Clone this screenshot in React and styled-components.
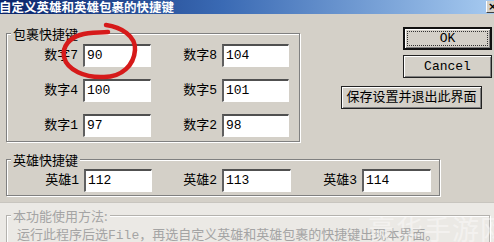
import React from 'react';
import styled, { createGlobalStyle } from 'styled-components';

const GlobalStyle = createGlobalStyle`
  html, body {
    margin: 0;
    padding: 0;
    background: #d4d0c8;
  }
  body {
    font-family: "Liberation Mono", "Noto Sans CJK SC", monospace;
    font-size: 13px;
    color: #000;
  }
`;

const Window = styled.div`
  position: relative;
  width: 494px;
  height: 242px;
  overflow: hidden;
  background: #d4d0c8;
  display: flex;
  flex-direction: column;
`;

const TitleBar = styled.div`
  height: 14px;
  flex: none;
  display: flex;
  align-items: center;
  justify-content: space-between;
  background: linear-gradient(90deg, #0a246a 0%, #3a6ab4 45%, #a6caf0 100%);
`;

const TitleText = styled.div`
  color: #fff;
  font-family: "Noto Sans CJK SC", sans-serif;
  font-weight: bold;
  font-size: 12.5px;
  line-height: 14px;
  margin-left: -1px;
  white-space: nowrap;
`;

const CloseBox = styled.div`
  width: 14px;
  height: 12px;
  margin-right: -6px;
  margin-top: -1px;
  background: #d4d0c8;
  border-left: 1px solid #fff;
  border-bottom: 1px solid #404040;
  font-family: "DejaVu Sans", sans-serif;
  font-size: 11px;
  font-weight: bold;
  line-height: 12px;
  padding-left: 1px;
  box-sizing: border-box;
`;

const Body = styled.div`
  padding: 12px 0 0 6px;
  flex: none;
`;

const TopRow = styled.div`
  display: flex;
`;

const GroupBox = styled.div`
  position: relative;
  width: ${p => p.$w}px;
  margin-top: ${p => p.$mt}px;
  border: 1px solid ${p => (p.$faded ? '#b4b2ae' : '#808080')};
  box-shadow: inset 1px 1px 0 #fff, 1px 1px 0 #fff;
  box-sizing: border-box;
  padding: ${p => p.$pad};
`;

const Caption = styled.span`
  position: absolute;
  top: -8px;
  left: 4px;
  padding: 0 2px;
  line-height: 15px;
  background: ${p => (p.$faded ? '#ebe9e5' : '#d4d0c8')};
  color: ${p => (p.$faded ? '#a4a4a4' : '#000')};
  font-family: "Noto Sans CJK SC", sans-serif;
  white-space: nowrap;
`;

const KeyGrid = styled.div`
  display: grid;
  grid-template-columns: ${p => p.$cols};
  grid-auto-rows: 23px;
  row-gap: 12px;
  align-items: center;
`;

const KeyLabel = styled.div`
  text-align: right;
  padding-right: 5px;
  line-height: 15px;
  white-space: nowrap;
`;

const KeyInput = styled.div`
  height: 23px;
  box-sizing: border-box;
  background: #fff;
  border-style: solid;
  border-width: 2px 1px 1px 2px;
  border-color: #505050 #fff #fff #606060;
  box-shadow: 1px 1px 0 #d4d0c8;
  padding-left: 2px;
  line-height: 19px;
`;

const ButtonColumn = styled.div`
  flex: 1;
  display: flex;
  flex-direction: column;
  align-items: flex-end;
  padding: 1px 2px 0 0;
`;

const Button = styled.div`
  position: relative;
  width: ${p => p.$w}px;
  height: 23px;
  margin-top: ${p => p.$mt || 0}px;
  margin-right: ${p => p.$mr || 0}px;
  box-sizing: border-box;
  background: #d4d0c8;
  border: ${p => (p.$default ? '2px solid #111' : '1px solid #222')};
  box-shadow: inset 1px 1px 0 #fff, inset -1px -1px 0 #808080;
  display: flex;
  align-items: center;
  justify-content: center;
  line-height: 15px;
  white-space: nowrap;
`;

const FocusRing = styled.span`
  position: absolute;
  inset: 2px;
  border: 1px dotted #333;
`;

const HelpPanel = styled.div`
  flex: 1;
  margin-top: 6px;
  border-top: 1px solid #c8c5bf;
  background: #ebe9e5;
  padding: 12px 4px 0 6px;
`;

const HelpText = styled.div`
  color: #a4a4a4;
  line-height: 15px;
  white-space: nowrap;
`;

const Watermark = styled.div`
  position: absolute;
  right: -14px;
  bottom: -6px;
  font-family: "Noto Sans CJK SC", sans-serif;
  font-size: 27px;
  letter-spacing: 1px;
  color: rgba(255, 255, 255, 0.42);
  white-space: nowrap;
  pointer-events: none;
`;

const Scribble = styled.svg`
  position: absolute;
  left: 0;
  top: 0;
  pointer-events: none;
`;

const packKeys = [
  ['数字7', '90', '数字8', '104'],
  ['数字4', '100', '数字5', '101'],
  ['数字1', '97', '数字2', '98'],
];

const heroKeys = [
  ['英雄1', '112'],
  ['英雄2', '113'],
  ['英雄3', '114'],
];

export default function App() {
  return (
    <>
      <GlobalStyle />
      <Window>
        <TitleBar>
          <TitleText>自定义英雄和英雄包裹的快捷键</TitleText>
          <CloseBox>×</CloseBox>
        </TitleBar>

        <Body>
          <TopRow>
            <GroupBox $w={294} $mt={7} $pad="10px 0 4px 0">
              <Caption>包裹快捷键</Caption>
              <KeyGrid $cols="76px 68px 71px 67px">
                {packKeys.map(([l1, v1, l2, v2]) => (
                  <React.Fragment key={l1}>
                    <KeyLabel>{l1}</KeyLabel>
                    <KeyInput>{v1}</KeyInput>
                    <KeyLabel>{l2}</KeyLabel>
                    <KeyInput>{v2}</KeyInput>
                  </React.Fragment>
                ))}
              </KeyGrid>
            </GroupBox>

            <ButtonColumn>
              <Button $w={89} $default>
                <FocusRing />
                OK
              </Button>
              <Button $w={89} $mt={5}>Cancel</Button>
              <Button $w={141} $mt={8} $mr={10}>保存设置并退出此界面</Button>
            </ButtonColumn>
          </TopRow>

          <GroupBox $w={434} $mt={17} $pad="9px 0 3px 0">
            <Caption>英雄快捷键</Caption>
            <KeyGrid $cols="77px 68px 70px 69px 71px 69px">
              {heroKeys.map(([l, v]) => (
                <React.Fragment key={l}>
                  <KeyLabel>{l}</KeyLabel>
                  <KeyInput>{v}</KeyInput>
                </React.Fragment>
              ))}
            </KeyGrid>
          </GroupBox>
        </Body>

        <HelpPanel>
          <GroupBox $w={484} $mt={0} $pad="12px 0 20px 10px" $faded>
            <Caption $faded>本功能使用方法:</Caption>
            <HelpText>运行此程序后选File，再选自定义英雄和英雄包裹的快捷键出现本界面。</HelpText>
          </GroupBox>
        </HelpPanel>

        <Watermark>豪华手游网</Watermark>

        <Scribble width="494" height="242" viewBox="0 0 494 242">
          <path
            d="M106 25 C121 27, 136 36, 135 50 C134 65, 122 77, 104 77 C85 78, 67 70, 64 57 C62 46, 70 38, 80 35 C90 32, 100 33, 108 32"
            fill="none"
            stroke="#d61a1a"
            strokeWidth="4.5"
            strokeLinecap="round"
          />
        </Scribble>
      </Window>
    </>
  );
}
